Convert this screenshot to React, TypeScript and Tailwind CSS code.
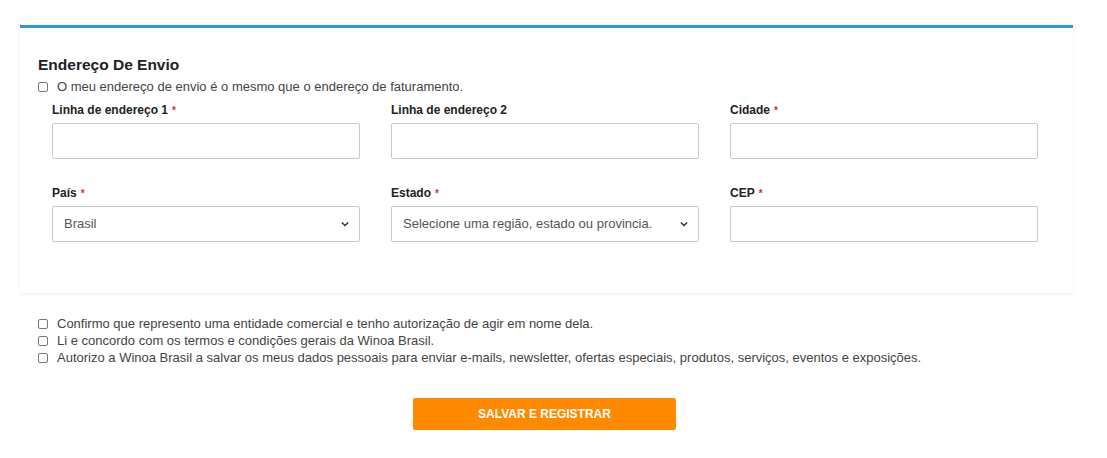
import { useState } from 'react'

const FONT = { fontFamily: '"Liberation Sans", Arial, sans-serif' }

type Field = {
  id: string
  label: string
  required?: boolean
  kind: 'text' | 'select'
  options?: string[]
}

const FIELDS: Field[] = [
  { id: 'street1', label: 'Linha de endereço 1', required: true, kind: 'text' },
  { id: 'street2', label: 'Linha de endereço 2', kind: 'text' },
  { id: 'city', label: 'Cidade', required: true, kind: 'text' },
  { id: 'country', label: 'País', required: true, kind: 'select', options: ['Brasil'] },
  {
    id: 'region',
    label: 'Estado',
    required: true,
    kind: 'select',
    options: ['Selecione uma região, estado ou provincia.'],
  },
  { id: 'postcode', label: 'CEP', required: true, kind: 'text' },
]

const CONSENTS = [
  'Confirmo que represento uma entidade comercial e tenho autorização de agir em nome dela.',
  'Li e concordo com os termos e condições gerais da Winoa Brasil.',
  'Autorizo a Winoa Brasil a salvar os meus dados pessoais para enviar e-mails, newsletter, ofertas especiais, produtos, serviços, eventos e exposições.',
]

function Checkbox({ id }: { id: string }) {
  return (
    <input
      id={id}
      type="checkbox"
      className="h-[10px] w-[10px] shrink-0 appearance-none rounded-[2px] border border-[#777] bg-white"
    />
  )
}

function Chevron() {
  return (
    <svg viewBox="0 0 16 16" className="pointer-events-none absolute right-[10px] top-1/2 h-[10px] w-[10px] -translate-y-1/2 text-[#333]" aria-hidden="true">
      <path d="M3 5.5 8 10.5 13 5.5" fill="none" stroke="currentColor" strokeWidth="2.2" />
    </svg>
  )
}

function FormField({ field }: { field: Field }) {
  const [value, setValue] = useState(field.options?.[0] ?? '')
  return (
    <div className="flex flex-col">
      <label htmlFor={field.id} className="mb-[4px] h-[17px] text-[12px] font-bold leading-[17px] text-[#222]">
        {field.label}
        {field.required && <span className="ml-[4px] text-[10px] align-top text-[#e02b27]">*</span>}
      </label>
      {field.kind === 'select' ? (
        <div className="relative">
          <select
            id={field.id}
            value={value}
            onChange={(e) => setValue(e.target.value)}
            className="h-[36px] w-full appearance-none rounded-[2px] border border-[#c9c9c9] bg-white pl-[11px] text-[13px] text-[#555] outline-none"
            style={FONT}
          >
            {field.options?.map((o) => (
              <option key={o}>{o}</option>
            ))}
          </select>
          <Chevron />
        </div>
      ) : (
        <input
          id={field.id}
          type="text"
          className="h-[36px] w-full rounded-[2px] border border-[#c9c9c9] bg-white px-[11px] text-[13px] outline-none"
        />
      )}
    </div>
  )
}

export default function App() {
  return (
    <div className="min-h-[458px] bg-white pt-[25px] text-[#333]" style={FONT}>
      <div className="mx-[20px] w-[1053px]">
        <section className="border-t-[3px] border-[#2b9ada] bg-white pb-[51px] shadow-[0_1px_3px_rgba(0,0,0,0.08)]">
          <div className="px-[18px] pt-[27px]">
            <h2 className="text-[15.5px] font-bold leading-[20px] text-[#222]">Endereço De Envio</h2>
            <label className="mt-[3px] flex items-center gap-[9px] text-[13px] leading-[17px] text-[#444]">
              <Checkbox id="same-as-billing" />
              O meu endereço de envio é o mesmo que o endereço de faturamento.
            </label>
          </div>
          <div className="grid grid-cols-[308px_308px_308px] gap-x-[31px] gap-y-[26px] pl-[32px] pt-[7px]">
            {FIELDS.map((f) => (
              <FormField key={f.id} field={f} />
            ))}
          </div>
        </section>

        <div className="flex flex-col px-[18px] pt-[22px]">
          {CONSENTS.map((text, i) => (
            <label key={i} className="flex items-center gap-[9px] text-[13px] leading-[17px] text-[#444]">
              <Checkbox id={`consent-${i}`} />
              {text}
            </label>
          ))}
        </div>

        <div className="flex justify-center pr-[4px] pt-[32px]">
          <button
            type="button"
            className="h-[32px] w-[263px] rounded-[2px] bg-[#ff8a00] text-[12px] font-bold uppercase text-white"
          >
            Salvar e registrar
          </button>
        </div>
      </div>
    </div>
  )
}
